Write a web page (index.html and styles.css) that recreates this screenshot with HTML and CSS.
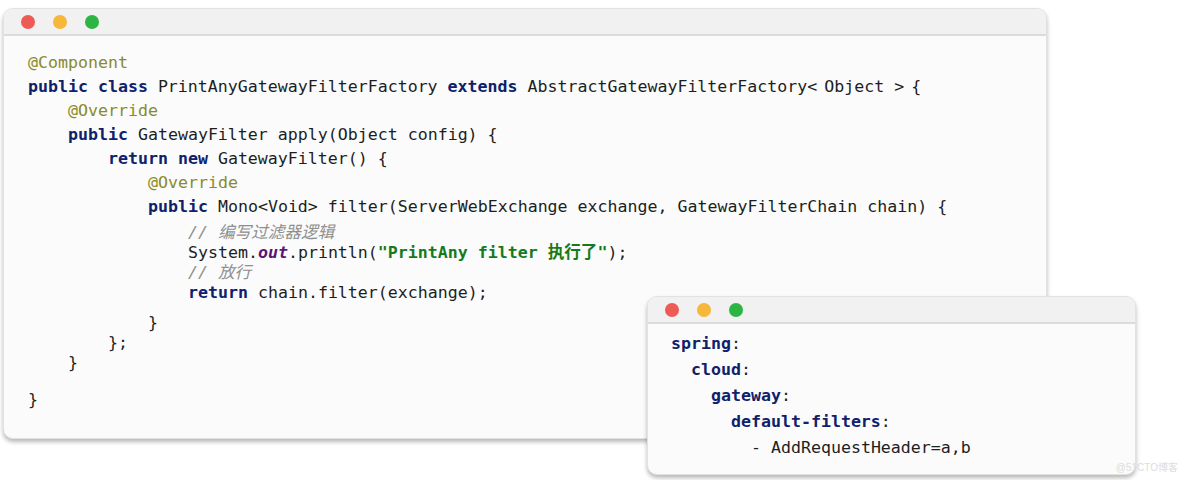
FILE: index.html
```html
<!DOCTYPE html>
<html lang="en">
<head>
    <meta charset="UTF-8">
    <meta name="viewport" content="width=device-width, initial-scale=1.0">
    <title>PrintAny Gateway Filter</title>
    <link rel="stylesheet" href="styles.css">
</head>
<body>
    <div class="desk">
        <!-- Java code window -->
        <div class="window main-window">
            <div class="titlebar">
                <span class="dot red"></span>
                <span class="dot yellow"></span>
                <span class="dot green"></span>
            </div>
            <div class="code">
                <div class="line"><span class="ann">@Component</span></div>
                <div class="line"><span class="kw">public class</span> PrintAnyGatewayFilterFactory <span class="kw">extends</span> AbstractGatewayFilterFactory<span class="thin">&lt;</span> Object <span class="thin">&gt;</span> {</div>
                <div class="line i1"><span class="ann">@Override</span></div>
                <div class="line i1"><span class="kw">public</span> GatewayFilter apply(Object config) {</div>
                <div class="line i2"><span class="kw">return new</span> GatewayFilter() {</div>
                <div class="line i3"><span class="ann">@Override</span></div>
                <div class="line i3"><span class="kw">public</span> Mono&lt;Void&gt; filter(ServerWebExchange exchange, GatewayFilterChain chain) {</div>
                <div class="block">
                    <div class="line tight i4"><span class="cmt">// 编写过滤器逻辑</span></div>
                    <div class="line tight i4">System.<span class="field">out</span>.println(<span class="str">"PrintAny filter 执行了"</span>);</div>
                    <div class="line tight i4"><span class="cmt">// 放行</span></div>
                    <div class="line tight i4"><span class="kw">return</span> chain.filter(exchange);</div>
                </div>
                <div class="block">
                    <div class="line tight i3">}</div>
                    <div class="line tight i2">};</div>
                    <div class="line tight i1">}</div>
                </div>
                <div class="line last">}</div>
            </div>
        </div>

        <!-- YAML config window -->
        <div class="window yaml-window">
            <div class="titlebar">
                <span class="dot red"></span>
                <span class="dot yellow"></span>
                <span class="dot green"></span>
            </div>
            <div class="code yaml">
                <div class="yline"><span class="key">spring</span>:</div>
                <div class="yline y1"><span class="key">cloud</span>:</div>
                <div class="yline y2"><span class="key">gateway</span>:</div>
                <div class="yline y3"><span class="key">default-filters</span>:</div>
                <div class="yline y4">- AddRequestHeader=a,b</div>
            </div>
        </div>

        <div class="watermark">@51CTO博客</div>
    </div>
</body>
</html>
```

FILE: styles.css
```css
body {
    margin: 0;
    background-color: #ffffff;
    font-family: "DejaVu Sans Mono", "Noto Sans CJK SC", monospace;
}
.desk {
    position: relative;
    width: 1184px;
    height: 480px;
    overflow: hidden;
}
.window {
    background-color: #fafbfa;
    border: 1px solid #e2e2e2;
    border-radius: 10px;
    box-shadow: 0 3px 4px rgba(0, 0, 0, 0.28);
    overflow: hidden;
}
.main-window {
    margin: 8px 0 0 3px;
    width: 1042px;
    height: 429px;
}
.yaml-window {
    position: absolute;
    left: 647px;
    top: 296px;
    width: 487px;
    height: 177px;
}
.titlebar {
    height: 25px;
    background-color: #f1f1f1;
    border-bottom: 2px solid #dcdcdc;
    display: flex;
    align-items: center;
    gap: 18px;
    padding-left: 17px;
}
.dot {
    width: 14px;
    height: 14px;
    border-radius: 50%;
    display: inline-block;
}
.red { background-color: #ee5b55; }
.yellow { background-color: #f6b73b; }
.green { background-color: #2cb543; }
.code {
    font-size: 16.6px;
    color: #1e1e1e;
    padding: 15px 0 0 24px;
}
.line {
    height: 24px;
    line-height: 24px;
    white-space: pre;
}
.block {
    padding-top: 4px;
}
.block + .block {
    padding-top: 10px;
}
.line.tight {
    height: 20px;
    line-height: 20px;
}
.line.last {
    margin-top: 15px;
}
.i1 { padding-left: 40px; }
.i2 { padding-left: 80px; }
.i3 { padding-left: 120px; }
.i4 { padding-left: 160px; }
.kw {
    color: #10206a;
    font-weight: bold;
}
.ann {
    color: #8a8a2c;
}
.cmt {
    color: #8f8f8f;
    font-style: italic;
}
.str {
    color: #177a1a;
    font-weight: bold;
}
.field {
    color: #5d1477;
    font-style: italic;
    font-weight: bold;
}
.thin {
    letter-spacing: -3px;
}
.yaml {
    padding: 7px 0 0 23px;
}
.yline {
    height: 26px;
    line-height: 26px;
    white-space: pre;
}
.y1 { padding-left: 20px; }
.y2 { padding-left: 40px; }
.y3 { padding-left: 60px; }
.y4 { padding-left: 80px; }
.key {
    color: #10206a;
    font-weight: bold;
}
.watermark {
    position: absolute;
    right: 6px;
    bottom: 6px;
    font-family: "Liberation Sans", "Noto Sans CJK SC", sans-serif;
    font-size: 10px;
    color: #dddddd;
}
```
